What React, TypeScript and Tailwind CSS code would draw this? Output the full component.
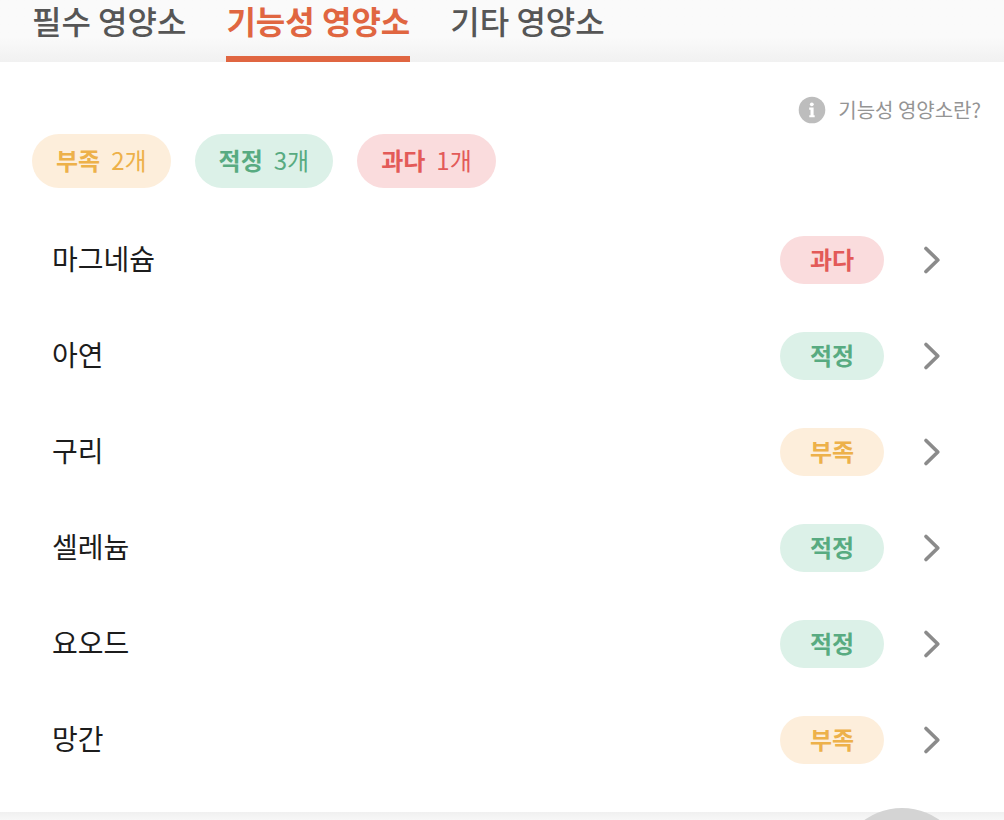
type Level = "low" | "good" | "high";

const levels: Record<Level, { label: string; style: string }> = {
  low: { label: "부족", style: "bg-[#fdeedb] text-[#edb14a]" },
  good: { label: "적정", style: "bg-[#dcf1e8] text-[#58ab81]" },
  high: { label: "과다", style: "bg-[#fadcdd] text-[#e35a58]" },
};

const tabs = ["필수 영양소", "기능성 영양소", "기타 영양소"];
const activeTab = "기능성 영양소";

const nutrients: { name: string; level: Level }[] = [
  { name: "마그네슘", level: "high" },
  { name: "아연", level: "good" },
  { name: "구리", level: "low" },
  { name: "셀레늄", level: "good" },
  { name: "요오드", level: "good" },
  { name: "망간", level: "low" },
];

const summary: Level[] = ["low", "good", "high"];

function InfoIcon() {
  return (
    <svg viewBox="0 0 28 28" className="size-7" aria-hidden="true">
      <circle cx="14" cy="14" r="13.3" fill="#bdbdbd" />
      <circle cx="13.8" cy="8.3" r="1.9" fill="#fff" />
      <path d="M11.2 11.6h4.4v7.6h1.1v2.1h-5.4v-2.1h1.2v-5.5h-1.3z" fill="#fff" />
    </svg>
  );
}

function Chevron() {
  return (
    <svg viewBox="0 0 24 32" className="h-8 w-6" fill="none" aria-hidden="true">
      <path
        d="M6 4.5 17.8 16 6 27.5"
        stroke="#8b8b8b"
        strokeWidth="3.7"
        strokeLinecap="round"
        strokeLinejoin="round"
      />
    </svg>
  );
}

export default function App() {
  return (
    <div className="flex min-h-screen flex-col bg-white font-['Noto_Sans_CJK_KR',sans-serif]">
      <nav
        role="tablist"
        className="flex gap-10 bg-linear-to-b from-[#fafafa] from-60% to-[#f1f1f1] px-8"
      >
        {tabs.map((tab) => (
          <button
            key={tab}
            type="button"
            role="tab"
            aria-selected={tab === activeTab}
            className={
              tab === activeTab
                ? "border-b-6 border-[#e06641] pb-4 text-[32px] leading-10 font-bold text-[#e06641]"
                : "border-b-6 border-transparent pb-4 text-[32px] leading-10 font-medium text-[#565656]"
            }
          >
            {tab}
          </button>
        ))}
      </nav>

      <main className="bg-white pt-8 pb-6">
        <div className="flex justify-end pr-[23px] pl-6">
          <button
            type="button"
            className="flex items-center gap-3 text-xl leading-8 text-[#949494]"
          >
            <InfoIcon />
            기능성 영양소란?
          </button>
        </div>

        <div className="mt-2 flex gap-6 px-8">
          {summary.map((level) => (
            <div
              key={level}
              className={`flex h-[54px] items-center gap-[11px] rounded-full px-6 pb-0.5 text-2xl ${levels[level].style}`}
            >
              <strong className="font-bold">{levels[level].label}</strong>
              <span>{nutrients.filter((n) => n.level === level).length}개</span>
            </div>
          ))}
        </div>

        <ul className="mt-6">
          {nutrients.map(({ name, level }) => (
            <li key={name}>
              <button
                type="button"
                className="flex h-24 w-full items-center pr-15 pl-13 text-left"
              >
                <span className="flex-1 pb-1 text-[28px] leading-10 text-[#1c1c1c]">
                  {name}
                </span>
                <span
                  className={`flex h-12 w-26 items-center justify-center rounded-full pb-0.5 text-2xl font-bold ${levels[level].style}`}
                >
                  {levels[level].label}
                </span>
                <span className="ml-9">
                  <Chevron />
                </span>
              </button>
            </li>
          ))}
        </ul>
      </main>

      <div className="grow bg-linear-to-b from-[#f0f0f0] to-[#f7f7f7]" />

      <button
        type="button"
        aria-label="맨 위로"
        className="fixed right-[38px] -bottom-[116px] size-32 rounded-full bg-[#d4d4d4]"
      />
    </div>
  );
}
